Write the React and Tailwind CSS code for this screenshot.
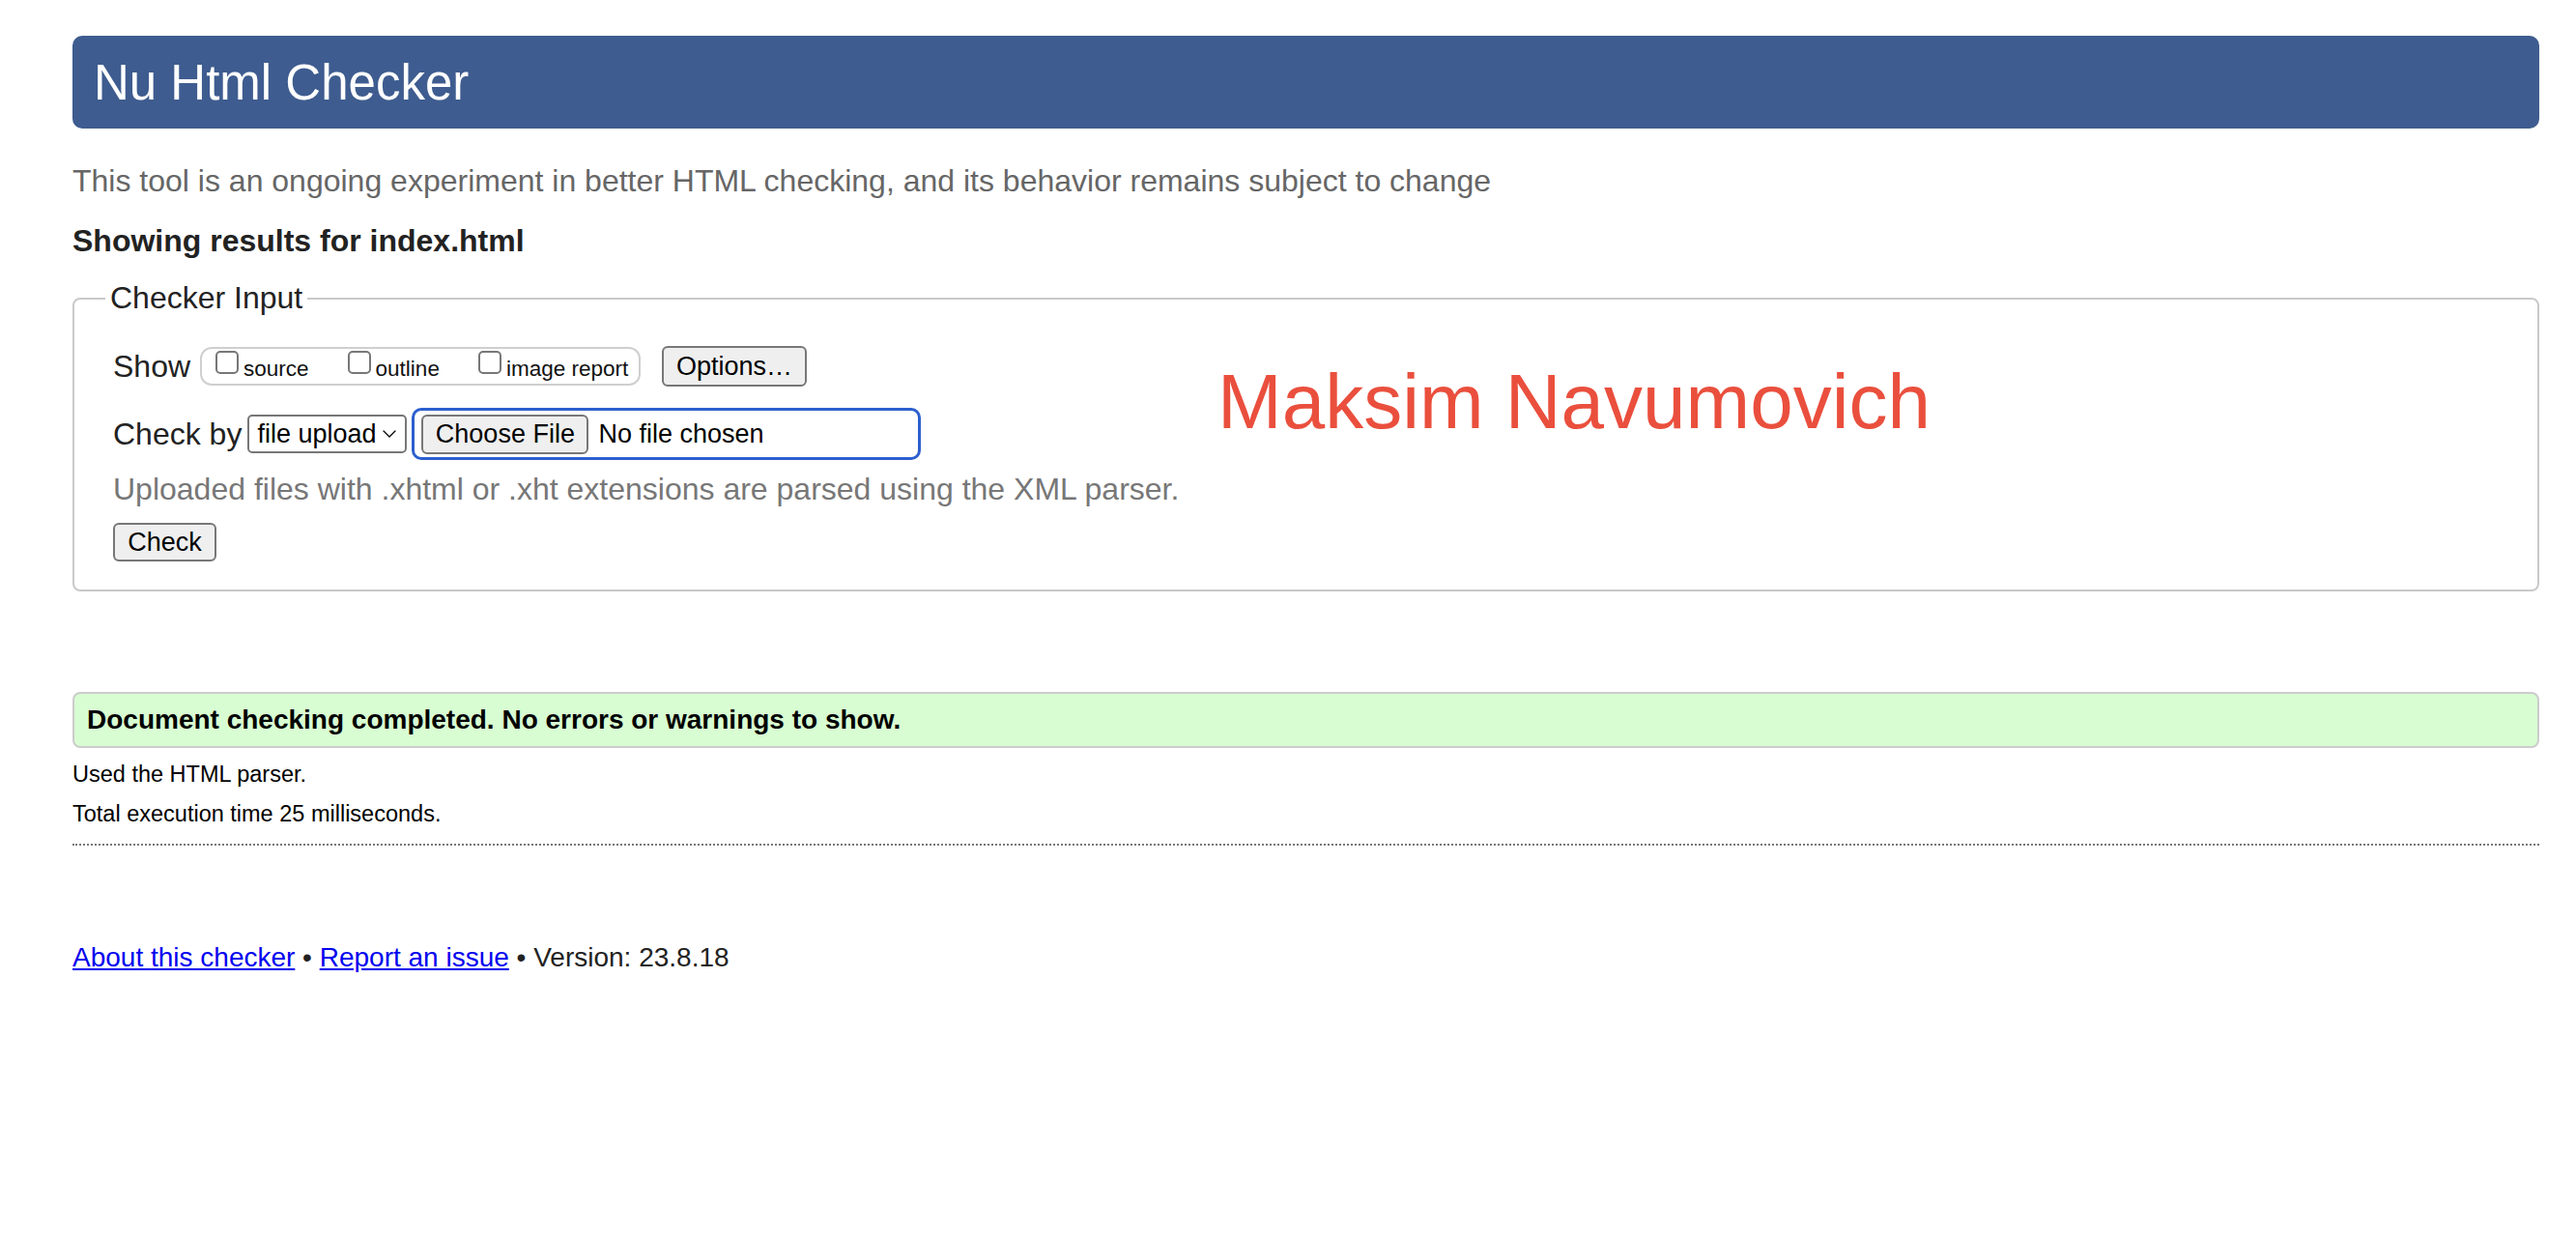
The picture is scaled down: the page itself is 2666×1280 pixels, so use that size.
import { ChevronDown } from 'lucide-react'

const FONT = "font-['Liberation_Sans','Helvetica',Arial,sans-serif]"

function Box({ label }) {
  return (
    <label className="flex items-start">
      <input
        type="checkbox"
        className="appearance-none w-[24px] h-[24px] mt-[2px] border-2 border-[#777] rounded-[5px] bg-white"
      />
      <span className="ml-[5px] mt-[10px] text-[22.5px] leading-none text-[#111]">{label}</span>
    </label>
  )
}

function Btn({ children, className = '' }) {
  return (
    <button
      className={`bg-[#efefef] border-2 border-[#777] rounded-[6px] text-[27px] leading-none text-black ${className}`}
    >
      {children}
    </button>
  )
}

export default function App() {
  return (
    <div className={`relative min-h-screen bg-white pl-[75px] pr-[38px] pt-[37px] text-[#222] ${FONT}`}>
      {/* Header */}
      <div className="h-[96px] rounded-[10px] bg-[#3e5c8f] flex items-center pl-[22px]">
        <h1 className="text-[51px] text-white leading-none">Nu Html Checker</h1>
      </div>

      <p className="mt-[36px] text-[32px] leading-[37px] text-[#666]">
        This tool is an ongoing experiment in better HTML checking, and its behavior remains subject to change
      </p>

      <p className="mt-[25px] text-[32px] leading-[37px] font-bold text-[#222]">Showing results for index.html</p>

      {/* Checker input */}
      <fieldset className="mt-[22px] border-2 border-[#c9c9c9] rounded-[8px] pl-[40px] pt-[31px] pb-[29px]">
        <legend className="-ml-[8px] px-[5px] text-[32px] leading-[37px] text-[#222]">Checker Input</legend>

        <div className="flex items-center h-[42px]">
          <span className="text-[32px] text-[#222]">Show</span>
          <div className="ml-[10px] w-[456px] h-[40px] border-2 border-[#cfcfcf] rounded-[12px] flex items-start pl-[14px] gap-[40px]">
            <Box label="source" />
            <Box label="outline" />
            <Box label="image report" />
          </div>
          <Btn className="ml-[22px] w-[150px] h-[42px]">Options…</Btn>
        </div>

        <div className="flex items-center mt-[22px] h-[54px]">
          <span className="text-[32px] text-[#222]">Check by</span>
          <div className="ml-[6px] w-[165px] h-[40px] border-2 border-[#777] rounded-[5px] flex items-center pl-[8px] pr-[4px] justify-between">
            <span className="text-[27px] leading-none text-black">file upload</span>
            <ChevronDown size={24} strokeWidth={1.3} className="text-black" />
          </div>
          <div className="ml-[5px] w-[527px] h-[54px] border-[3px] border-[#2c5fce] rounded-[10px] flex items-center pl-[7px]">
            <Btn className="w-[173px] h-[41px]">Choose File</Btn>
            <span className="ml-[10px] text-[27px] text-black">No file chosen</span>
          </div>
        </div>

        <p className="mt-[12px] text-[32px] leading-[37px] text-[#777]">
          Uploaded files with .xhtml or .xht extensions are parsed using the XML parser.
        </p>

        <Btn className="mt-[16px] w-[107px] h-[40px]">Check</Btn>
      </fieldset>

      <div className="absolute left-[1260px] top-[376px] text-[80px] leading-none text-[#ea4f3d]">Maksim Navumovich</div>

      {/* Result */}
      <div className="mt-[104px] h-[58px] border-2 border-[#cccccc] rounded-[8px] bg-[#d8fdd2] flex items-center pl-[13px]">
        <span className="text-[28px] font-bold text-black">Document checking completed. No errors or warnings to show.</span>
      </div>

      <p className="mt-[13px] text-[23.5px] leading-[28px] text-black">Used the HTML parser.</p>
      <p className="mt-[13px] text-[23.5px] leading-[28px] text-black">Total execution time 25 milliseconds.</p>

      <div className="mt-[17px] border-b-2 border-dotted border-[#777]" />

      <p className="mt-[99px] text-[28px] leading-[33px] text-[#222]">
        <a href="#" className="text-[#0000ee] underline">About this checker</a>
        {' • '}
        <a href="#" className="text-[#0000ee] underline">Report an issue</a>
        {' • Version: 23.8.18'}
      </p>
    </div>
  )
}
